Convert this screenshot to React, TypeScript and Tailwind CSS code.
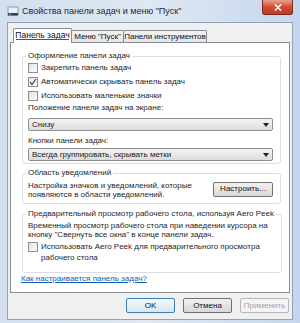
import React from 'react';

const font = { fontFamily: '"Liberation Sans", Arial, sans-serif' };

const Check: React.FC<{ checked?: boolean }> = ({ checked }) => (
  <span className="w-[10px] h-[10px] shrink-0 border border-[#8f8f8f] bg-gradient-to-br from-[#e4e4e4] to-[#fbfbfb] flex items-center justify-center">
    {checked && (
      <svg width="8" height="8" viewBox="0 0 8 8">
        <path d="M1 4.2 L3 6.5 L7 1" fill="none" stroke="#444" strokeWidth="1.2" />
      </svg>
    )}
  </span>
);

const Select: React.FC<{ value: string }> = ({ value }) => (
  <div className="h-[13px] flex items-center justify-between border border-[#8e8f8f] rounded-[2px] bg-gradient-to-b from-[#f3f3f3] to-[#dcdcdc] pl-[3px] pr-[3px]">
    <span className="text-[8px] leading-none text-[#222] whitespace-nowrap">{value}</span>
    <svg width="6" height="4" viewBox="0 0 6 4">
      <path d="M0 0 H6 L3 4 Z" fill="#222" />
    </svg>
  </div>
);

const Button: React.FC<{ children: React.ReactNode; def?: boolean; disabled?: boolean; className?: string }> = ({ children, def, disabled, className }) => (
  <div
    className={
      'h-[15px] flex items-center justify-center rounded-[2px] border text-[8px] leading-none whitespace-nowrap ' +
      (disabled
        ? 'border-[#b5b8bb] bg-[#f4f4f4] text-[#a3a3a3] '
        : def
        ? 'border-[#3c7fb1] bg-gradient-to-b from-[#f2f8fc] to-[#d9e6ef] text-[#111] '
        : 'border-[#707070] bg-gradient-to-b from-[#f2f2f2] to-[#d8d8d8] text-[#111] ') +
      (className ?? '')
    }
  >
    {children}
  </div>
);

const App: React.FC = () => {
  return (
    <div
      className="w-[300px] h-[323px] flex flex-col bg-gradient-to-r from-[#d3dfee] via-[#dfe8f3] to-[#c5d6ec] overflow-hidden"
      style={font}
    >
      {/* title bar */}
      <div className="h-[22px] flex items-start shrink-0">
        <div className="flex items-center pl-[7px] pt-[5px] gap-[3px]">
          <svg width="12" height="12" viewBox="0 0 12 12">
            <rect x="1" y="2" width="10" height="8" fill="#e9eef5" stroke="#7a8aa0" strokeWidth="0.8" />
            <rect x="1" y="8" width="10" height="2.5" fill="#2f3d55" />
            <rect x="2" y="8.5" width="2" height="1.5" fill="#4c8fd6" />
          </svg>
          <span className="text-[9px] leading-none text-[#1c2a3c] whitespace-nowrap">Свойства панели задач и меню "Пуск"</span>
        </div>
        <div className="ml-auto mr-[7px] w-[31px] h-[15px] rounded-b-[3px] border border-t-0 border-[#7a2a20] bg-gradient-to-b from-[#e8a08e] via-[#cf4a31] to-[#c23a22] flex items-center justify-center">
          <svg width="8" height="7" viewBox="0 0 8 7">
            <path d="M1 0.5 L7 6.5 M7 0.5 L1 6.5" stroke="#fff" strokeWidth="1.6" />
          </svg>
        </div>
      </div>

      {/* client area */}
      <div className="mx-[7px] mb-[3px] flex-1 flex flex-col border border-[#8fa3bd] bg-[#f0f0f0]">
        {/* tabs */}
        <div className="flex items-end pl-[5px] pt-[4px] h-[19px] shrink-0">
          <div className="relative z-10 -mb-px h-[15px] w-[59px] flex items-start justify-center pt-[2px] border border-b-0 border-[#898c95] bg-white rounded-t-[2px]">
            <span className="text-[8.5px] leading-none text-[#111] whitespace-nowrap">Панель задач</span>
            <span className="absolute left-[2px] right-[2px] bottom-[3px] h-[1px] bg-[#e0141e]" />
          </div>
          <div className="h-[12px] w-[52px] flex items-center justify-center border border-b-0 border-l-0 border-[#898c95] bg-gradient-to-b from-[#f3f3f3] to-[#e5e5e5] rounded-tr-[2px]">
            <span className="text-[8px] leading-none text-[#111] whitespace-nowrap">Меню "Пуск"</span>
          </div>
          <div className="h-[12px] w-[83px] flex items-center justify-center border border-b-0 border-l-0 border-[#898c95] bg-gradient-to-b from-[#f3f3f3] to-[#e5e5e5] rounded-tr-[2px]">
            <span className="text-[8px] leading-none text-[#111] whitespace-nowrap">Панели инструментов</span>
          </div>
        </div>

        {/* panel */}
        <div className="mx-[2px] h-[251px] shrink-0 border border-[#898c95] bg-white pl-[11px] pr-[8px] pt-[8px] flex flex-col text-[8px] leading-none text-[#262626] whitespace-nowrap">
          <fieldset className="border border-[#d5dfe5] rounded-[3px] px-[5px] pb-[3px] h-[113px]">
            <legend className="px-[2px] ml-[-2px] h-[10px] leading-[10px]">Оформление панели задач</legend>
            <div className="flex flex-col">
              <div className="h-[14px] flex items-center gap-[3px]"><Check /><span>Закрепить панель задач</span></div>
              <div className="h-[14px] flex items-center gap-[3px]"><Check checked /><span>Автоматически скрывать панель задач</span></div>
              <div className="h-[14px] flex items-center gap-[3px]"><Check /><span>Использовать маленькие значки</span></div>
              <div className="h-[12px] flex items-center mt-[-1px]">Положение панели задач на экране:</div>
              <div className="mt-[4px] mr-[2px]"><Select value="Снизу" /></div>
              <div className="h-[12px] flex items-center mt-[4px]">Кнопки панели задач:</div>
              <div className="mt-[1px] mr-[2px]"><Select value="Всегда группировать, скрывать метки" /></div>
            </div>
          </fieldset>

          <fieldset className="mt-[4px] border border-[#d5dfe5] rounded-[3px] px-[5px] h-[36px]">
            <legend className="px-[2px] ml-[-2px] h-[10px] leading-[10px]">Область уведомлений</legend>
            <div className="flex items-center justify-between mt-[3px]">
              <div className="flex flex-col leading-[9px]">
                <span>Настройка значков и уведомлений, которые</span>
                <span>появляются в области уведомлений.</span>
              </div>
              <Button className="w-[60px] mr-[2px] mt-[-2px]">Настроить...</Button>
            </div>
          </fieldset>

          <fieldset className="mt-[5px] border border-[#d5dfe5] rounded-[3px] px-[5px] h-[64px]">
            <legend className="px-[2px] ml-[-2px] h-[10px] leading-[10px]">Предварительный просмотр рабочего стола, используя Aero Peek</legend>
            <div className="flex flex-col leading-[9px] mt-[2px]">
              <span>Временный просмотр рабочего стола при наведении курсора на</span>
              <span>кнопку "Свернуть все окна" в конце панели задач.</span>
            </div>
            <div className="flex items-start gap-[3px] mt-[2px] leading-[11px]">
              <span className="mt-[1px]"><Check /></span>
              <span>
                Использовать Aero Peek для предварительного просмотра
                <br />
                рабочего стола
              </span>
            </div>
          </fieldset>

          <div className="mt-[2px] ml-[-1px] text-[#0a5fb4] underline">Как настраивается панель задач?</div>
        </div>

        {/* buttons */}
        <div className="flex justify-end gap-[8px] mt-[5px] mr-[3px]">
          <Button def className="w-[49px]">OK</Button>
          <Button className="w-[49px]">Отмена</Button>
          <Button disabled className="w-[49px]">Применить</Button>
        </div>
      </div>
    </div>
  );
};

export default App;
